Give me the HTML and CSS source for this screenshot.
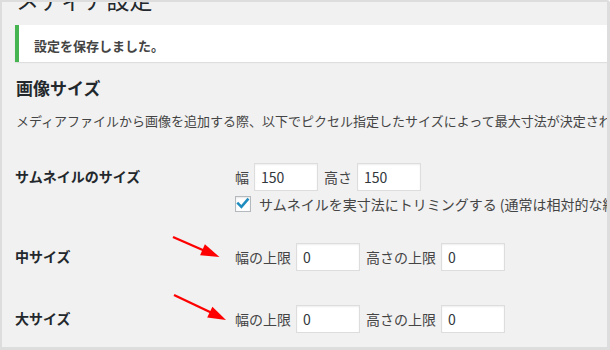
FILE: index.html
```html
<!DOCTYPE html>
<html lang="ja">
<head>
<meta charset="utf-8">
<title>メディア設定</title>
<link rel="stylesheet" href="styles.css">
</head>
<body>
<div class="frame">
  <div class="wrap">
    <h1 class="title">メディア設定</h1>
    <div class="notice"><p class="notice-text">設定を保存しました。</p></div>
    <h2 class="section">画像サイズ</h2>
    <p class="desc">メディアファイルから画像を追加する際、以下でピクセル指定したサイズによって最大寸法が決定されます。</p>
    <div class="form">
      <div class="row row-thumb">
        <div class="th">サムネイルのサイズ</div>
        <div class="td">
          <div class="fields">
            <span class="lbl">幅</span><input class="num" type="text" value="150"><span class="lbl">高さ</span><input class="num" type="text" value="150">
          </div>
          <div class="check">
            <span class="cb"><svg width="16" height="16" viewBox="0 0 16 16"><path d="M3.2 7.6 L6.4 10.8 L12.6 3.6" fill="none" stroke="#1e8cbe" stroke-width="2.6" stroke-linecap="square"/></svg></span>
            <span class="check-text">サムネイルを実寸法にトリミングする (通常は相対的な縮小を行います)</span>
          </div>
        </div>
      </div>
      <div class="row row-medium">
        <div class="th">中サイズ</div>
        <div class="td">
          <div class="fields">
            <span class="lbl">幅の上限</span><input class="num" type="text" value="0"><span class="lbl">高さの上限</span><input class="num" type="text" value="0">
          </div>
        </div>
      </div>
      <div class="row row-large">
        <div class="th">大サイズ</div>
        <div class="td">
          <div class="fields">
            <span class="lbl">幅の上限</span><input class="num" type="text" value="0"><span class="lbl">高さの上限</span><input class="num" type="text" value="0">
          </div>
        </div>
      </div>
    </div>
  </div>
</div>
<svg class="arrows" width="610" height="350" viewBox="0 0 610 350">
  <line x1="173" y1="237" x2="205" y2="251" stroke="#f00" stroke-width="2.4"/>
  <polygon points="219.5,257 204.9,244.3 200.1,255.3" fill="#f00"/>
  <line x1="174" y1="295" x2="212" y2="313" stroke="#f00" stroke-width="2.4"/>
  <polygon points="226,320 212.4,306.8 207.2,317.6" fill="#f00"/>
</svg>
</body>
</html>
```
FILE: styles.css
```css
html, body {
  margin: 0;
  padding: 0;
}
body {
  font-family: "Noto Sans CJK JP", "Noto Sans", sans-serif;
  color: #444;
}
.frame {
  width: 610px;
  height: 350px;
  box-sizing: border-box;
  border-style: solid;
  border-color: #dddddd;
  border-width: 2px 3px 3px 2px;
  border-radius: 0 3px 0 0;
  background: #f1f1f1;
  overflow: hidden;
  position: relative;
}
.wrap {
  padding-left: 13px;
}
.title {
  margin: -17px 0 0 1px;
  font-size: 23px;
  font-weight: 400;
  line-height: 29px;
  color: #23282d;
  white-space: nowrap;
}
.notice {
  margin-top: 11px;
  height: 37px;
  box-sizing: border-box;
  background: #fff;
  border-left: 4px solid #46b450;
  box-shadow: 0 1px 1px rgba(0, 0, 0, 0.08);
  display: flex;
  align-items: center;
  padding: 4px 15px 0;
}
.notice-text {
  margin: 0;
  font-size: 13px;
  font-weight: 700;
  line-height: 20px;
  color: #444;
}
.section {
  margin: 14px 0 0 1px;
  font-size: 17px;
  font-weight: 700;
  line-height: 24px;
  color: #23282d;
}
.desc {
  margin: 11px 0 0 1px;
  font-size: 13px;
  line-height: 20px;
  white-space: nowrap;
  color: #444;
}
.form {
  margin-top: 32px;
}
.row {
  display: grid;
  grid-template-columns: 220px 1fr;
  align-items: start;
}
.row-thumb {
  margin-bottom: 31px;
}
.row-medium {
  margin-bottom: 34px;
}
.th {
  font-size: 14px;
  font-weight: 700;
  line-height: 27px;
  color: #23282d;
  white-space: nowrap;
}
.td {
  white-space: nowrap;
}
.fields {
  display: flex;
  align-items: center;
  height: 28px;
}
.lbl {
  font-size: 14px;
  line-height: 28px;
  margin-right: 5px;
  color: #444;
}
.num {
  width: 64px;
  height: 28px;
  box-sizing: border-box;
  margin: 0 6px 0 0;
  padding: 0 6px;
  border: 1px solid #ddd;
  box-shadow: inset 0 1px 2px rgba(0, 0, 0, 0.07);
  background: #fff;
  font-family: "Noto Sans CJK JP", "Noto Sans", sans-serif;
  font-size: 14px;
  color: #32373c;
  outline: none;
}
.check {
  display: flex;
  align-items: center;
  margin-top: 5px;
  height: 16px;
}
.cb {
  width: 16px;
  height: 16px;
  box-sizing: border-box;
  border: 1px solid #b4b9be;
  background: #fff;
  box-shadow: inset 0 1px 2px rgba(0, 0, 0, 0.1);
  margin-right: 8px;
  display: flex;
  align-items: center;
  justify-content: center;
  flex: none;
}
.cb svg {
  display: block;
  margin: -1px;
}
.check-text {
  font-size: 14px;
  line-height: 16px;
  color: #444;
}
.arrows {
  position: absolute;
  top: 0;
  left: 0;
  pointer-events: none;
}
```
